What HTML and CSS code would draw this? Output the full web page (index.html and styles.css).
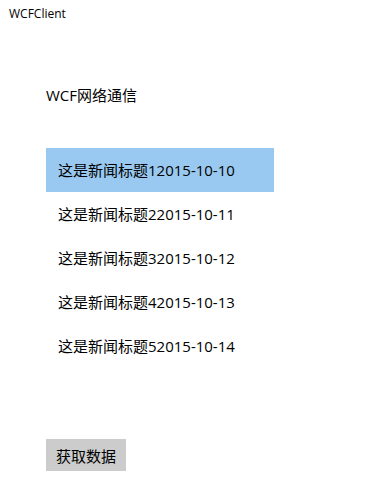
FILE: index.html
```html
<!DOCTYPE html>
<html lang="zh-CN">
<head>
    <meta charset="UTF-8">
    <title>WCFClient</title>
    <link rel="stylesheet" href="styles.css">
</head>
<body>
    <div class="titlebar">WCFClient</div>
    <div class="content">
        <h1 class="heading">WCF网络通信</h1>
        <ul class="news">
            <li class="item selected">这是新闻标题12015-10-10</li>
            <li class="item">这是新闻标题22015-10-11</li>
            <li class="item">这是新闻标题32015-10-12</li>
            <li class="item">这是新闻标题42015-10-13</li>
            <li class="item">这是新闻标题52015-10-14</li>
        </ul>
        <button class="fetch">获取数据</button>
    </div>
</body>
</html>
```

FILE: styles.css
```css
body {
    margin: 0;
    background-color: #ffffff;
    font-family: "Open Sans", "Noto Sans CJK SC", sans-serif;
    color: #000000;
}
.titlebar {
    font-size: 12px;
    line-height: 16px;
    padding: 6px 0 0 9px;
    height: 26px;
}
.content {
    padding: 0 0 0 46px;
    display: flex;
    flex-direction: column;
    align-items: flex-start;
}
.heading {
    font-size: 15px;
    font-weight: normal;
    line-height: 20px;
    margin: 53px 0 0 0;
}
.news {
    list-style: none;
    margin: 43px 0 0 0;
    padding: 0;
    width: 228px;
}
.item {
    height: 44px;
    line-height: 44px;
    padding-left: 12px;
    font-size: 15px;
}
.item.selected {
    background-color: #99c9f0;
}
.fetch {
    margin-top: 71px;
    width: 80px;
    height: 32px;
    border: none;
    background-color: #cccccc;
    font-family: "Open Sans", "Noto Sans CJK SC", sans-serif;
    font-size: 15px;
    color: #000000;
    padding: 0;
}
```
